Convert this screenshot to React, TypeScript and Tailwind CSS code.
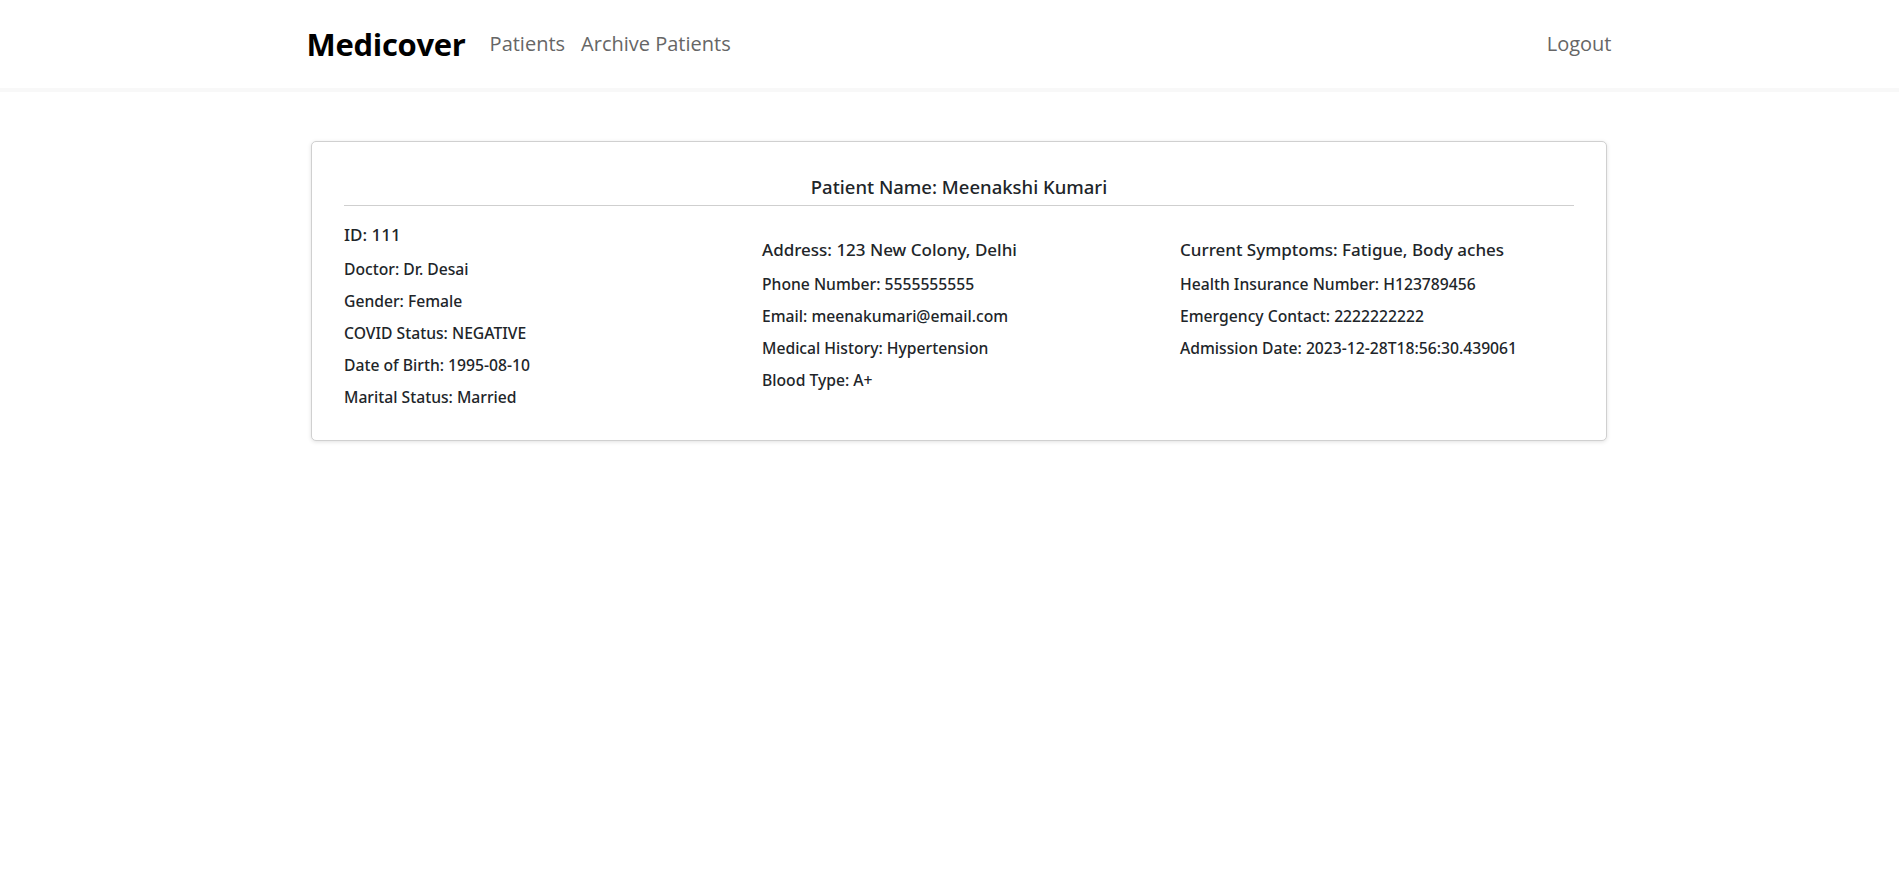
import React from "react";

export default function App() {
  const col1 = [
    "Doctor: Dr. Desai",
    "Gender: Female",
    "COVID Status: NEGATIVE",
    "Date of Birth: 1995-08-10",
    "Marital Status: Married",
  ];
  const col2 = [
    "Phone Number: 5555555555",
    "Email: meenakumari@email.com",
    "Medical History: Hypertension",
    "Blood Type: A+",
  ];
  const col3 = [
    "Health Insurance Number: H123789456",
    "Emergency Contact: 2222222222",
    "Admission Date: 2023-12-28T18:56:30.439061",
  ];
  const item = "text-[15.7px] font-medium leading-[22px] mt-[10px] first:mt-0";
  const head = "text-[17px] font-medium leading-[26px]";
  return (
    <div className="min-h-screen bg-white text-[#212529] font-['Open_Sans',sans-serif]">
      <nav className="h-[92px] bg-white border-b-4 border-[#f8f8f8]">
        <div className="mx-auto flex h-full w-[1320px] items-center justify-between pl-[17px] pr-[0px]">
          <div className="flex items-center">
            <span className="text-[31px] font-bold tracking-[-0.3px] text-black mr-[24px]">Medicover</span>
            <a className="text-[20px] text-[#666] mr-[16px]">Patients</a>
            <a className="text-[20px] text-[#666]">Archive Patients</a>
          </div>
          <a className="text-[20px] text-[#666] mr-[-2px]">Logout</a>
        </div>
      </nav>
      <div className="pt-[49px]">
        <div className="ml-[311px] w-[1296px] rounded-[5px] border border-[#d0d0d0] bg-white p-8 font-['Noto_Sans',sans-serif] shadow-[0_1px_4px_rgba(0,0,0,0.12)]">
          <div className="text-center text-[18.5px] font-medium leading-[26px] pb-[5px]">Patient Name: Meenakshi Kumari</div>
          <div className="border-t border-[#cfcfcf]" />
          <div className="-mx-3 grid grid-cols-3 pt-[16px]">
            <div className="px-3">
              <div className={`${head} mb-[10px]`}>ID: 111</div>
              {col1.map((t) => (
                <div key={t} className={item}>{t}</div>
              ))}
            </div>
            <div className="px-3 pt-[15px]">
              <div className={`${head} mb-[7px]`}>Address: 123 New Colony, Delhi</div>
              {col2.map((t) => (
                <div key={t} className={item}>{t}</div>
              ))}
            </div>
            <div className="px-3 pt-[15px]">
              <div className={`${head} mb-[7px]`}>Current Symptoms: Fatigue, Body aches</div>
              {col3.map((t) => (
                <div key={t} className={item}>{t}</div>
              ))}
            </div>
          </div>
        </div>
      </div>
    </div>
  );
}
